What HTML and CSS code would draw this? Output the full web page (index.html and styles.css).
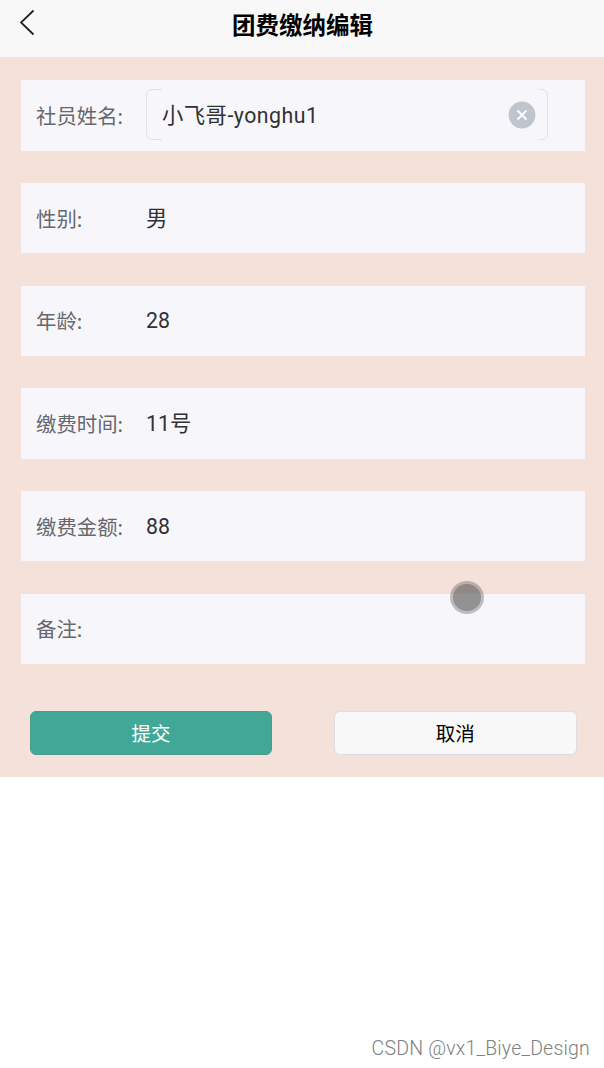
FILE: index.html
```html
<!DOCTYPE html>
<html lang="zh-CN">
<head>
  <meta charset="UTF-8">
  <title>团费缴纳编辑</title>
  <link rel="stylesheet" href="styles.css">
</head>
<body>
<header class="navbar">
  <svg class="back" width="16" height="27" viewBox="0 0 16 27">
    <path d="M13.5 1.5 L1 13.5 L13.5 25.5"/>
  </svg>
  <h1 class="title">团费缴纳编辑</h1>
</header>
<form class="form">
  <div class="row">
    <span class="label">社员姓名:</span>
    <div class="field">
      <span class="field-text">小飞哥-yonghu1</span>
      <svg class="clear" width="28" height="28" viewBox="0 0 28 28">
        <circle cx="14" cy="14" r="13.4"/>
        <path d="M9.5 9.5 L18.5 18.5 M18.5 9.5 L9.5 18.5"/>
      </svg>
    </div>
  </div>
  <div class="row">
    <span class="label">性别:</span>
    <span class="value">男</span>
  </div>
  <div class="row">
    <span class="label">年龄:</span>
    <span class="value">28</span>
  </div>
  <div class="row">
    <span class="label">缴费时间:</span>
    <span class="value">11号</span>
  </div>
  <div class="row">
    <span class="label">缴费金额:</span>
    <span class="value">88</span>
  </div>
  <div class="row">
    <span class="label">备注:</span>
    <span class="touch"></span>
  </div>
  <div class="buttons">
    <button type="button" class="btn submit">提交</button>
    <button type="button" class="btn cancel">取消</button>
  </div>
</form>
<footer class="watermark">CSDN @vx1_Biye_Design</footer>
</body>
</html>
```

FILE: styles.css
```css
* {
  box-sizing: border-box;
}

body {
  margin: 0;
  height: 1068px;
  display: flex;
  flex-direction: column;
  background: #fff;
  font-family: "Noto Sans", "Noto Sans CJK SC", sans-serif;
}

.navbar {
  height: 57px;
  padding: 0 19px 8px 20px;
  display: grid;
  grid-template-columns: 16px 1fr 16px;
  align-items: center;
  background: #f8f8f8;
}

.back {
  margin-top: -4px;
  fill: none;
  stroke: #222;
  stroke-width: 1.8;
}

.title {
  margin: 0;
  text-align: center;
  font-size: 23.5px;
  line-height: 30px;
  font-weight: 700;
  color: #000;
}

.form {
  height: 720px;
  padding: 23.2px 19px 0 21px;
  display: flex;
  flex-direction: column;
  gap: 32.3px;
  background: #f4e1da;
}

.row {
  position: relative;
  height: 70.4px;
  flex-shrink: 0;
  padding: 0 37px 0 15px;
  display: flex;
  align-items: center;
  background: #f7f6fb;
}

.label {
  padding-top: 1px;
  width: 110px;
  font-size: 20.4px;
  line-height: 30px;
  color: #66686c;
}

.value,
.field-text {
  padding-top: 1px;
  font-family: Roboto, "Noto Sans CJK SC", sans-serif;
  font-size: 21.3px;
  line-height: 30px;
  color: #303133;
}

.field {
  position: relative;
  flex: 1;
  height: 51px;
  margin-bottom: 2px;
  padding: 0 11px 0 15px;
  display: flex;
  align-items: center;
  justify-content: space-between;
  border-radius: 6px;
  border: 1px solid #e1e3e7;
}

/* only the ends of the frame stay visible */
.field::before {
  content: "";
  position: absolute;
  top: -1px;
  bottom: -1px;
  left: 15px;
  right: 8px;
  background: #f7f6fb;
}

.field-text,
.clear {
  position: relative;
}

.field-text {
  padding-top: 3px;
  letter-spacing: 0.5px;
}

.clear {
  margin-top: 2px;
}

.clear circle {
  fill: #c0c4cc;
}

.clear path {
  fill: none;
  stroke: #fff;
  stroke-width: 1.8;
}

/* finger mark */
.touch {
  position: absolute;
  left: 429px;
  top: -13px;
  width: 34px;
  height: 33px;
  padding: 3px;
  border-radius: 50%;
  background: rgba(40, 38, 36, 0.28);
}

.touch::after {
  content: "";
  display: block;
  width: 28px;
  height: 27px;
  border-radius: 50%;
  background: rgba(85, 85, 85, 0.42);
}

.buttons {
  margin-top: 14.7px;
  padding: 0 8.5px 0 9px;
  display: grid;
  grid-template-columns: 1fr 1fr;
  gap: 62px;
}

.btn {
  height: 44px;
  padding: 2px 0 0;
  border-radius: 6px;
  font-family: inherit;
  font-size: 19.5px;
  line-height: 30px;
}

.submit {
  background: #41a898;
  border: 1px solid #4c9b8d;
  color: #fff;
}

.cancel {
  background: #f8f8f8;
  border: 1px solid #dcdfe2;
  color: #000;
}

.watermark {
  margin-top: auto;
  padding: 0 14px 7px 0;
  text-align: right;
  font-family: Roboto, sans-serif;
  font-size: 19.5px;
  line-height: 24px;
  font-weight: 300;
  letter-spacing: 0.2px;
  color: #808080;
}
```
